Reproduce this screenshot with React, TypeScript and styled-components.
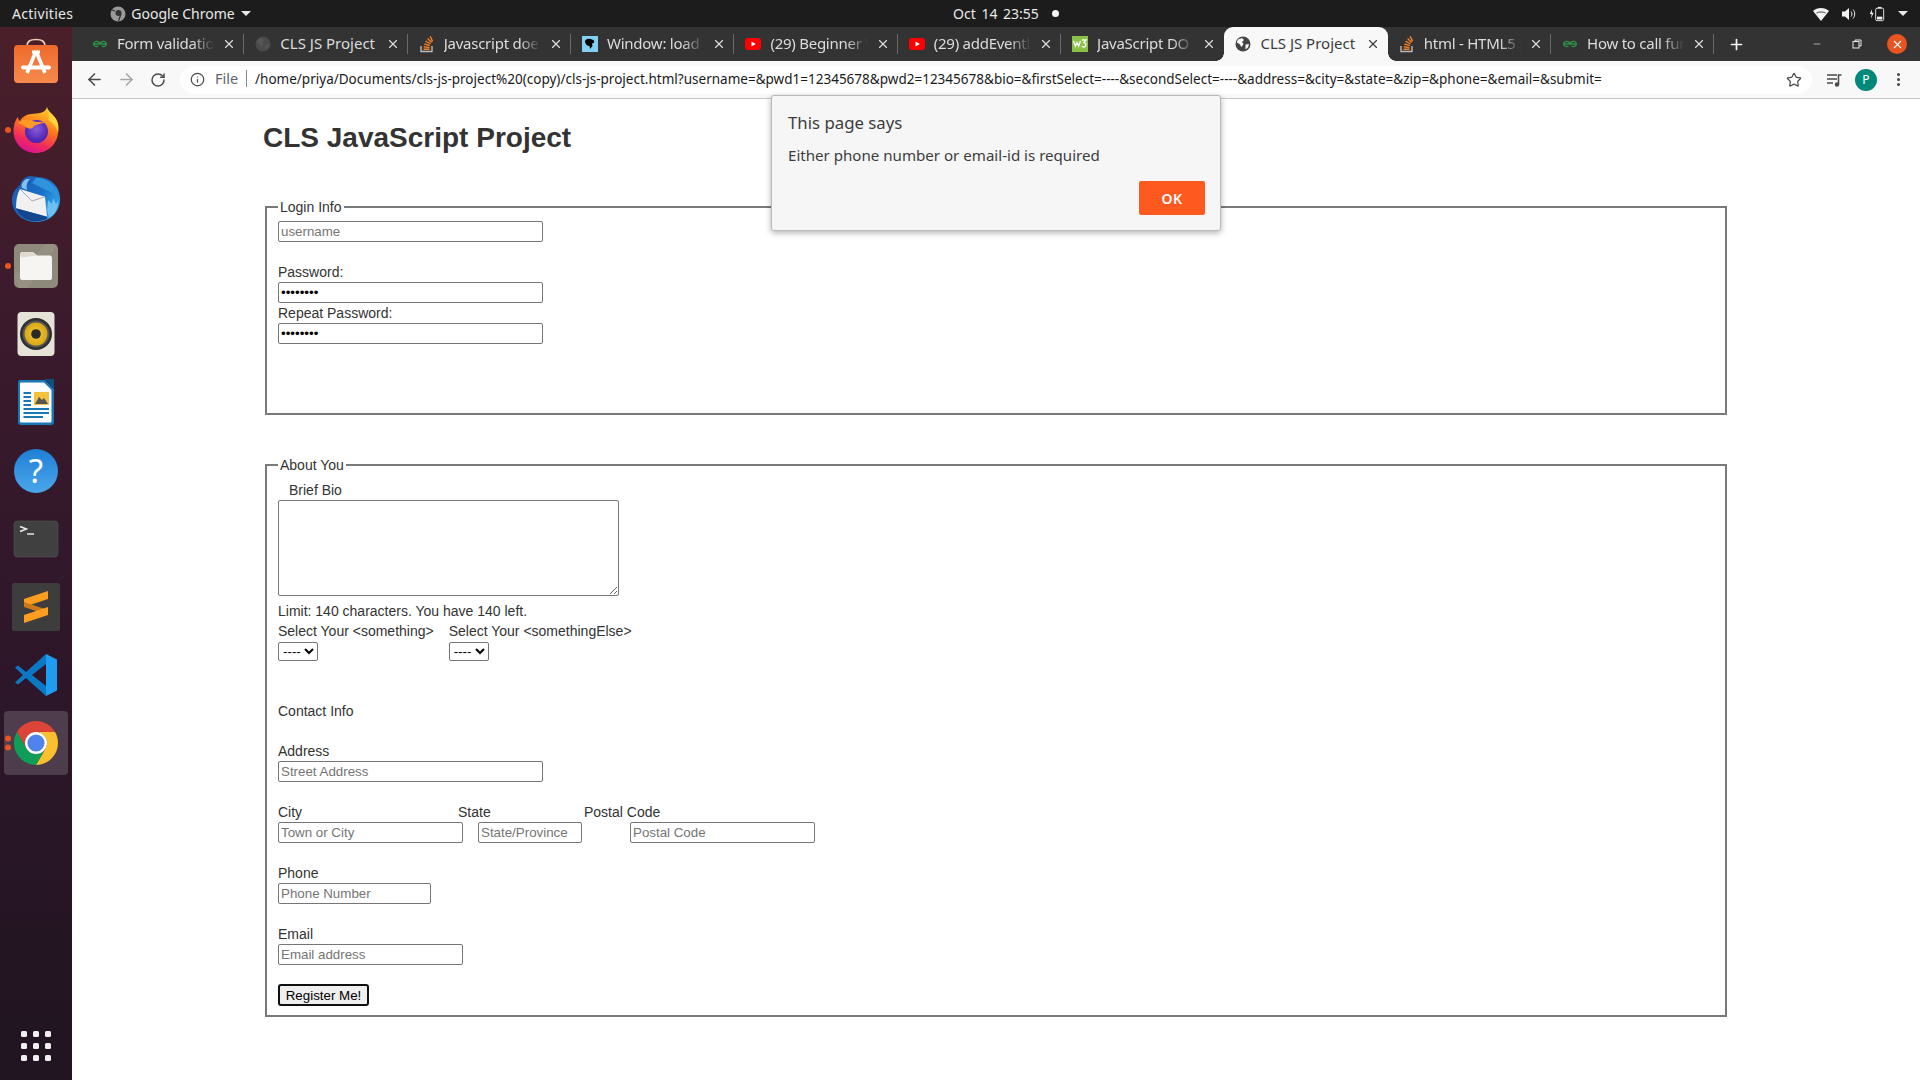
import React from 'react';
import styled, { createGlobalStyle } from 'styled-components';
import { ArrowLeft, ArrowRight, RotateCw, Info, Star, MoreVertical, Plus, X, Minus } from 'lucide-react';

const UI = '"Noto Sans", "Open Sans", sans-serif';

const Global = createGlobalStyle`
  html, body { margin: 0; padding: 0; height: 100%; background: #fff; overflow: hidden; }
  #root { height: 100%; }
`;

const Screen = styled.div`
  position: relative;
  width: 1920px;
  height: 1080px;
  overflow: hidden;
  display: flex;
  flex-direction: column;
  background: #fff;
`;

const TopBar = styled.header`
  height: 27px;
  flex: none;
  background: #1c1c1c;
  color: #e8e8e8;
  font: 14px ${UI};
  display: grid;
  grid-template-columns: 1fr auto 1fr;
  align-items: center;
  padding: 0 12px 0 12px;
`;
const TopLeft = styled.div`
  display: flex;
  align-items: center;
`;
const Activities = styled.span`
  letter-spacing: 0.3px;
`;
const AppMenu = styled.div`
  display: flex;
  align-items: center;
  gap: 5px;
  margin-left: 37px;
`;
const Caret = styled.span`
  width: 0;
  height: 0;
  border-left: 5px solid transparent;
  border-right: 5px solid transparent;
  border-top: 5px solid #e8e8e8;
  margin-left: 1px;
`;
const Clock = styled.div`
  display: flex;
  align-items: center;
  gap: 13px;
  word-spacing: 2px;
  margin-left: 92px;
`;
const RecDot = styled.span`
  width: 7px;
  height: 7px;
  border-radius: 50%;
  background: #f2f2f2;
`;
const TopRight = styled.div`
  display: flex;
  justify-content: flex-end;
  align-items: center;
  gap: 12px;
`;

const Desktop = styled.div`
  flex: 1;
  display: flex;
  min-height: 0;
`;

const Dock = styled.nav`
  width: 72px;
  flex: none;
  padding-top: 1px;
  box-sizing: border-box;
  display: flex;
  flex-direction: column;
  background: linear-gradient(180deg, #4a1f2a 0%, #3a1a2c 30%, #2c1629 65%, #201520 100%);
`;
const DockItem = styled.div<{ $active?: boolean }>`
  position: relative;
  height: 68.1px;
  flex: none;
  display: flex;
  align-items: center;
  justify-content: center;
  &::before {
    content: '';
    position: absolute;
    display: ${p => (p.$active ? 'block' : 'none')};
    inset: 2px 4px;
    border-radius: 4px;
    background: rgba(255, 255, 255, 0.17);
  }
  svg { position: relative; }
`;
const RunDots = styled.div`
  position: absolute;
  left: 4.5px;
  top: 50%;
  transform: translateY(-50%);
  display: flex;
  flex-direction: column;
  gap: 3px;
`;
const RunDot = styled.span`
  width: 6px;
  height: 6px;
  border-radius: 50%;
  background: #e95420;
`;
const AppGrid = styled.div`
  margin: auto 0 19px 21px;
  display: grid;
  grid-template-columns: repeat(3, 6px);
  gap: 6px;
`;
const AppGridDot = styled.span`
  width: 6px;
  height: 6px;
  border-radius: 1.5px;
  background: #f0f0f0;
`;

const Browser = styled.div`
  flex: 1;
  display: flex;
  flex-direction: column;
  min-width: 0;
`;

const TabStrip = styled.div`
  height: 34px;
  flex: none;
  background: #333333;
  display: flex;
  align-items: stretch;
  padding-left: 9px;
  padding-right: 13px;
`;
const Tab = styled.div<{ $active?: boolean; $sep?: boolean }>`
  position: relative;
  width: 163.35px;
  flex: none;
  box-sizing: border-box;
  display: flex;
  align-items: center;
  gap: 8px;
  padding: 0 8px 0 11px;
  font: 15px ${UI};
  color: ${p => (p.$active ? '#3c3c3c' : '#dcdcdc')};
  background: ${p => (p.$active ? '#f8f8f8' : 'transparent')};
  border-radius: ${p => (p.$active ? '9px 9px 0 0' : '0')};
  &::after {
    content: '';
    position: absolute;
    display: ${p => (p.$sep ? 'block' : 'none')};
    right: 0;
    top: 7px;
    height: 20px;
    width: 1px;
    background: #6a6a6a;
  }
  &::before {
    content: '';
    position: absolute;
    display: ${p => (p.$active ? 'block' : 'none')};
    bottom: 0;
    left: -8px;
    right: -8px;
    height: 8px;
    background:
      radial-gradient(circle at 0 0, #333 7.5px, #f8f8f8 8px) left bottom / 8px 8px no-repeat,
      radial-gradient(circle at 100% 0, #333 7.5px, #f8f8f8 8px) right bottom / 8px 8px no-repeat;
  }
`;
const TabTitle = styled.span<{ $fade?: boolean }>`
  flex: 1;
  min-width: 0;
  margin: -2px 0 0 1px;
  white-space: nowrap;
  overflow: hidden;
  ${p =>
    p.$fade
      ? `letter-spacing: -0.25px;
         -webkit-mask-image: linear-gradient(90deg, #000 78%, transparent 100%);
         mask-image: linear-gradient(90deg, #000 78%, transparent 100%);`
      : ''}
`;
const NewTab = styled.div`
  width: 44px;
  display: flex;
  align-items: center;
  justify-content: center;
  color: #f2f2f2;
`;
const WindowControls = styled.div`
  margin-left: auto;
  display: flex;
  align-items: center;
  color: #e8e8e8;
`;
const WinButton = styled.div`
  width: 40px;
  display: flex;
  align-items: center;
  justify-content: center;
`;
const CloseCircle = styled.div`
  width: 20px;
  height: 20px;
  border-radius: 50%;
  background: #e95420;
  color: #fff;
  display: flex;
  align-items: center;
  justify-content: center;
  margin-left: 10px;
`;

const Toolbar = styled.div`
  height: 37px;
  flex: none;
  box-sizing: content-box;
  background: #f8f8f8;
  border-bottom: 1px solid #c6c6c6;
  display: flex;
  align-items: center;
  padding: 0 6px;
`;
const NavButton = styled.div<{ $dim?: boolean }>`
  width: 32px;
  height: 28px;
  flex: none;
  display: flex;
  align-items: center;
  justify-content: center;
  color: ${p => (p.$dim ? '#a6a6a6' : '#4a4a4a')};
`;
const Omnibox = styled.div`
  flex: 1;
  min-width: 0;
  height: 28px;
  margin: 0 6px;
  background: #fff;
  border-radius: 14px;
  display: flex;
  align-items: center;
  padding: 0 10px 0 10px;
  font: 13.53px ${UI};
`;
const FileChip = styled.span`
  color: #5f6368;
  font-size: 14.4px;
  margin-left: 10px;
  margin-top: -2px;
  padding-right: 8px;
  border-right: 1px solid #8a8a8a;
  line-height: 17px;
`;
const UrlText = styled.span`
  flex: 1;
  color: #1a1a1a;
  margin-left: 8px;
  margin-top: -2px;
  white-space: nowrap;
  overflow: hidden;
`;
const Avatar = styled.div`
  width: 22px;
  height: 22px;
  border-radius: 50%;
  background: #00897b;
  color: #fff;
  font: 12px ${UI};
  display: flex;
  align-items: center;
  justify-content: center;
`;

const Page = styled.main`
  flex: 1;
  min-height: 0;
  padding-left: 191px;
  font: 14px "Liberation Sans", Arial, sans-serif;
  color: #333;
`;
const Title = styled.h1`
  margin: 23px 0 0;
  font: bold 28px/32px "Liberation Sans", Arial, sans-serif;
  color: #333;
`;
const Group = styled.fieldset<{ $top: number; $bottom: number }>`
  width: 1462px;
  box-sizing: border-box;
  margin: ${p => p.$top}px 0 0 2px;
  padding: 6px 11px ${p => p.$bottom}px 11px;
  border: 2px solid #7a7a7a;
`;
const Legend = styled.legend`
  padding: 0 2px;
  line-height: 16px;
`;
const FieldLabel = styled.label<{ $top?: number; $indent?: number }>`
  display: block;
  line-height: 16px;
  margin: ${p => p.$top ?? 0}px 0 2px ${p => p.$indent ?? 0}px;
`;
const TextField = styled.input<{ $w: number; $gap?: number }>`
  display: block;
  box-sizing: border-box;
  width: ${p => p.$w}px;
  height: 21px;
  margin: 0 0 0 ${p => p.$gap ?? 0}px;
  padding: 1px 2px;
  border: 1px solid #767676;
  border-radius: 2px;
  background: #fff;
  font: 13.33px "Liberation Sans", Arial, sans-serif;
  color: #000;
  &::placeholder { color: #757575; }
`;
const Bio = styled.textarea`
  display: block;
  box-sizing: border-box;
  width: 341px;
  height: 96px;
  margin: 0;
  padding: 2px;
  border: 1px solid #767676;
  border-radius: 2px;
  font: 13.33px "Liberation Sans", Arial, sans-serif;
`;
const Note = styled.div`
  line-height: 16px;
  margin-top: 7px;
`;
const SelectRow = styled.div`
  display: flex;
  gap: 15px;
  margin-top: 4px;
`;
const SelectCol = styled.div`
  display: flex;
  flex-direction: column;
  align-items: flex-start;
  gap: 3px;
  line-height: 16px;
`;
const Picker = styled.select`
  box-sizing: border-box;
  width: 40px;
  height: 19px;
  margin: 0;
  font: 13.33px "Liberation Sans", Arial, sans-serif;
  color: #000;
  background: #fff;
  border: 1px solid #767676;
  border-radius: 2px;
`;
const LabelRow = styled.div`
  display: flex;
  line-height: 16px;
  margin: 22px 0 2px;
`;
const LabelCell = styled.span<{ $w: number }>`
  width: ${p => p.$w}px;
  flex: none;
`;
const InputRow = styled.div`
  display: flex;
`;
const Submit = styled.button`
  display: block;
  box-sizing: border-box;
  width: 91px;
  height: 22px;
  margin: 19px 0 0;
  padding: 0;
  border: 2px solid #101010;
  border-radius: 3px;
  background: #efefef;
  font: 13.33px "Liberation Sans", Arial, sans-serif;
  color: #000;
`;

const Dialog = styled.div`
  position: absolute;
  left: 771px;
  top: 95px;
  width: 450px;
  height: 136px;
  box-sizing: border-box;
  background: #f6f6f6;
  border: 1px solid #b9b9b9;
  border-radius: 3px;
  box-shadow: 0 2px 6px rgba(0, 0, 0, 0.3);
  padding: 15px 15px 15px 16px;
  display: flex;
  flex-direction: column;
  font-family: ${UI};
  color: #3d3d3d;
`;
const DialogTitle = styled.div`
  font-size: 16.8px;
  line-height: 24px;
`;
const DialogText = styled.div`
  font-size: 15.1px;
  line-height: 20px;
  margin-top: 10px;
`;
const DialogOk = styled.button`
  align-self: flex-end;
  margin-top: auto;
  width: 66px;
  height: 34px;
  border: 0;
  border-radius: 2px;
  background: #fe5a1f;
  color: #fff;
  font: 600 14px ${UI};
  letter-spacing: 0.5px;
`;

const Globe = ({ c = '#444' }: { c?: string }) => (
  <svg width="16" height="16" viewBox="0 0 16 16" style={{ flex: 'none' }}>
    <circle cx="8" cy="8" r="7.5" fill={c} />
    <path d="M3 3.5 L7 2 L9 4 L7 6 L8.5 8 L6.5 11 L4.5 8 L1.8 6.5Z M10.5 8.5 L14 8 L13 11.5 L10.5 13.5Z" fill="#f8f8f8" opacity={c === '#444' ? 1 : 0.07} />
  </svg>
);
const Gfg = () => (
  <svg width="16" height="16" viewBox="0 0 16 16" style={{ flex: 'none' }}>
    <path d="M8 8 H15 M8 8 H1 M8 8 C7.5 5 3 4.5 1.8 7 C1 9.5 4 11.5 6.4 10 M8 8 C8.5 5 13 4.5 14.2 7 C15 9.5 12 11.5 9.6 10" fill="none" stroke="#2f8d46" strokeWidth="1.4" />
  </svg>
);
const StackO = () => (
  <svg width="16" height="18" viewBox="0 0 16 18" style={{ flex: 'none' }}>
    <path d="M2 11 V16.5 H13 V11" fill="none" stroke="#bcbbbb" strokeWidth="1.4" />
    <path d="M4.5 14.2 H10.5 M4.7 11.8 L10.5 12.6 M5.4 9 L10.9 10.6 M6.6 6.2 L11.6 9 M8.6 3.6 L12.6 7.6 M11.2 1.4 L13.6 6.4" stroke="#f48024" strokeWidth="1.4" fill="none" />
  </svg>
);
const Mdn = () => (
  <svg width="16" height="16" viewBox="0 0 16 16" style={{ flex: 'none' }}>
    <rect width="16" height="16" fill="#83d0f2" />
    <path d="M3 5 C4 2.5 8 2 10 3.5 C12 4 13 6 11.5 7 L10 7.5 L10.5 10 L8 13 L7.5 10 C5.5 10 3 8 3 5Z" fill="#000" />
  </svg>
);
const Yt = () => (
  <svg width="16" height="16" viewBox="0 0 16 16" style={{ flex: 'none' }}>
    <rect y="2" width="16" height="12" rx="3" fill="#f00" />
    <path d="M6.5 5.5 L10.8 8 L6.5 10.5Z" fill="#fff" />
  </svg>
);
const W3 = () => (
  <svg width="16" height="16" viewBox="0 0 16 16" style={{ flex: 'none' }}>
    <rect width="16" height="16" fill="#8ac249" />
    <path d="M1.5 5 L3.4 10 L5 6.5 L6.6 10 L8.5 5" fill="none" stroke="#fff" strokeWidth="1.3" />
    <path d="M10 4 H14 L12 6.6 C14.4 6.6 14.6 11 11.8 11 C10.8 11 10.2 10.6 9.8 10" fill="none" stroke="#fff" strokeWidth="1.3" />
  </svg>
);

const AppStoreIcon = () => (
  <svg width="48" height="48" viewBox="0 0 48 48">
    <defs><linearGradient id="as" x1="0" y1="0" x2="0" y2="1"><stop offset="0" stopColor="#ef6a2c" /><stop offset="1" stopColor="#f68a4e" /></linearGradient></defs>
    <path d="M15 9 C15 3 18 1.5 24 1.5 S33 3 33 9" fill="none" stroke="#eccdb0" strokeWidth="1.6" />
    <rect x="2" y="7" width="44" height="38" rx="4" fill="url(#as)" />
    <path d="M24 13 L15 35 M24 13 L33 35" stroke="#fff" strokeWidth="3.6" />
    <path d="M11 29.5 H37" stroke="#fff" strokeWidth="4" strokeLinecap="round" />
    <path d="M20 14 H28" stroke="#fff" strokeWidth="3" />
  </svg>
);
const FirefoxIcon = () => (
  <svg width="48" height="48" viewBox="0 0 48 48">
    <defs>
      <linearGradient id="ff" x1="0.7" y1="0" x2="0.3" y2="1"><stop offset="0" stopColor="#ffd02e" /><stop offset="0.4" stopColor="#ff7a1c" /><stop offset="0.75" stopColor="#f02a5c" /><stop offset="1" stopColor="#d8119a" /></linearGradient>
      <radialGradient id="ffp" cx="0.5" cy="0.4"><stop offset="0" stopColor="#8a5ce0" /><stop offset="1" stopColor="#4f27b0" /></radialGradient>
    </defs>
    <path d="M35 1 C36 6 41 8 44 13 C47 18 46.5 24 46 27 C45 38 36 47 24 47 C11 47 1.5 37 1.5 25 C1.5 20 3 14 6 11 C6 13 7 14.5 8 15 C10 11 15 8 19 8 C26 7 33 8 35 1Z" fill="url(#ff)" />
    <circle cx="24.5" cy="25.5" r="11.5" fill="url(#ffp)" />
    <path d="M6 17 C10 13 17 12 21 15 C24 17 30 15 33 17 C28 17 25 19 22 20 C20 25 14 22 11 19 C9 18 7 18 6 17Z" fill="#ff9a26" />
    <path d="M35 1 C36 6 41 8 44 13 C47 18 46.5 24 46 27 C45 22 41 16 36 14 C38 9 36 5 35 1Z" fill="#ffd33a" />
  </svg>
);
const ThunderbirdIcon = () => (
  <svg width="48" height="48" viewBox="0 0 48 48">
    <defs>
      <linearGradient id="tb" x1="0" y1="0" x2="1" y2="0.6"><stop offset="0" stopColor="#1c55ad" /><stop offset="0.6" stopColor="#1a70c8" /><stop offset="1" stopColor="#2ea4ea" /></linearGradient>
    </defs>
    <path d="M18 2 C12 3 9 7 8 11 C3 15 0 20 0 26 C0 38 10 48 24 48 C38 48 48 38 48 25 C48 12 38 3 25 3 C23 3 20 2 18 2Z" fill="url(#tb)" />
    <path d="M24 4 C34 3 46 12 47 27 C44 22 40 18 34 16 L20 9Z" fill="#2f94dc" />
    <path d="M36 26 L40 30 L41 24 L44 30 L46 27 C46 36 42 41 37 44 L35 36Z" fill="#6cc0f2" />
    <path d="M8 15 L33 22.7 L35 42.7 L4 34.3 C4 27 5 20 8 15Z" fill="#f2f1f2" />
    <path d="M8 15 L20 27 L33 22.7" fill="none" stroke="#9aa4ae" strokeWidth="0.9" />
    <path d="M4 34.3 C6 41 13 46 22 47.5 C27 47.5 31 46.5 35 45 L35 42.7 Z" fill="#14458f" />
    <path d="M14 5 C10 8 9 11 10 14 L15 16 C14 11 15 8 18 5Z" fill="#7fc2f0" />
  </svg>
);
const FilesIcon = () => (
  <svg width="48" height="48" viewBox="0 0 48 48">
    <rect x="2" y="2" width="44" height="44" rx="5" fill="#8e8a7b" />
    <path d="M2 34 L34 2 H46 L16 46 H7Z" fill="#fff" opacity="0.06" />
    <path d="M8 13 C8 11 9 10 11 10 H21 L25 13.5 H38 C39 13.5 40 14.5 40 16 V36 C40 37 39 38 38 38 H10 C9 38 8 37 8 36Z" fill="#f7f5f2" />
    <path d="M8 13 C8 11 9 10 11 10 H21 L25 13.5 L9 15.5Z" fill="#dedbd3" />
  </svg>
);
const RhythmIcon = () => (
  <svg width="48" height="48" viewBox="0 0 48 48">
    <defs><radialGradient id="rb"><stop offset="0" stopColor="#f3cd3a" /><stop offset="1" stopColor="#d8a615" /></radialGradient></defs>
    <rect x="5.5" y="2" width="37" height="44" rx="4" fill="#e5e2d7" />
    <circle cx="24" cy="24" r="16" fill="#2f2f2f" />
    <circle cx="24" cy="24" r="13.5" fill="#555" />
    <circle cx="24" cy="24" r="11.5" fill="url(#rb)" />
    <circle cx="24" cy="24" r="4.8" fill="#2a2a2a" />
  </svg>
);
const WriterIcon = () => (
  <svg width="48" height="48" viewBox="0 0 48 48">
    <path d="M8 1 H33 L42 10 V43 C42 45 41 46 39 46 H9 C7 46 6 45 6 43 V3 C6 2 7 1 8 1Z" fill="#1a77b5" />
    <path d="M9 3.5 H32 L39.5 11 V42 C39.5 43 39 43.5 38 43.5 H9.5 C8.5 43.5 8 43 8 42 V5 C8 4 8.5 3.5 9 3.5Z" fill="#fbfcfd" />
    <path d="M33 0 H42 V10Z" fill="#114f7e" />
    <path d="M11.5 14 H19 M11.5 18 H19 M11.5 22 H19 M11.5 26 H19 M11.5 30 H37 M11.5 34 H37 M11.5 38 H31" stroke="#1a77b5" strokeWidth="2" />
    <rect x="22" y="13" width="15" height="13" fill="#f2c23e" />
    <path d="M23 25 L27 18 L30 21 L32 19 L36 25Z" fill="#555" />
  </svg>
);
const HelpIcon = () => (
  <svg width="48" height="48" viewBox="0 0 48 48">
    <defs><linearGradient id="hp" x1="0" y1="0" x2="0" y2="1"><stop offset="0" stopColor="#1f7fd6" /><stop offset="1" stopColor="#4aa6ea" /></linearGradient></defs>
    <circle cx="24" cy="24" r="22" fill="url(#hp)" />
    <text x="24" y="36" textAnchor="middle" fontFamily="Noto Sans" fontSize="33" fill="#fff">?</text>
  </svg>
);
const TerminalIcon = () => (
  <svg width="48" height="48" viewBox="0 0 48 48">
    <rect x="2" y="6" width="44" height="36" rx="3.5" fill="#404040" stroke="#555" strokeWidth="0.6" />
    <path d="M8 11.5 L14.5 14 L8 16.5" fill="none" stroke="#eee" strokeWidth="1.4" />
    <path d="M15 19 H22" stroke="#eee" strokeWidth="1.4" />
  </svg>
);
const SublimeIcon = () => (
  <svg width="48" height="48" viewBox="0 0 48 48">
    <rect width="48" height="48" rx="2" fill="#3d3d3d" />
    <path d="M36 8 L12 16 V24 L36 16Z" fill="#ff9d1e" />
    <path d="M12 19 L36 27 V32 L12 24Z" fill="#c9781a" />
    <path d="M36 24 L12 32 V40 L36 32Z" fill="#ff9d1e" />
  </svg>
);
const CodeIcon = () => (
  <svg width="48" height="48" viewBox="0 0 48 48">
    <path d="M34 45 L14 27 L6 33.5 L3 31.5 L11 24 L3 16.5 L6 14.5 L14 21 L34 3 V13 L20 24 L34 35Z" fill="#0b78c6" />
    <path d="M34 3 L45 8.5 V39.5 L34 45Z" fill="#1f9cf0" />
  </svg>
);
const ChromeIcon = () => {
  const red = 'M4.95 13 A22 22 0 0 1 43.05 13 L24 13 A11 11 0 0 0 14.47 29.5Z';
  return (
    <svg width="48" height="48" viewBox="0 0 48 48">
      <path d={red} fill="#db4437" />
      <path d={red} fill="#fbc02d" transform="rotate(120 24 24)" />
      <path d={red} fill="#0f9d58" transform="rotate(240 24 24)" />
      <circle cx="24" cy="24" r="11" fill="#fff" />
      <circle cx="24" cy="24" r="8.6" fill="#4f84ec" />
    </svg>
  );
};
const ShellChrome = () => (
  <svg width="16" height="16" viewBox="0 0 16 16">
    <circle cx="8" cy="8" r="7.5" fill="#9a9a9a" />
    <circle cx="8.5" cy="7" r="3" fill="#333" />
    <path d="M11 8 L8.5 15 M5 5 L2 4" stroke="#333" strokeWidth="1.2" />
  </svg>
);
const Wifi = () => (
  <svg width="16" height="14" viewBox="0 0 16 14"><path d="M0 4 C4 0 12 0 16 4 L8 14Z" fill="#f2f2f2" /><path d="M3.5 6 C6 4.6 10 4.6 12.5 6" stroke="#1c1c1c" strokeWidth="0.8" fill="none" /></svg>
);
const Volume = () => (
  <svg width="16" height="14" viewBox="0 0 16 14"><path d="M1 4.5 H4 L8 1 V13 L4 9.5 H1Z" fill="#f2f2f2" /><path d="M10 4.5 C11.3 6 11.3 8 10 9.5 M12 2.5 C14.3 5 14.3 9 12 11.5" stroke="#f2f2f2" strokeWidth="1" fill="none" /></svg>
);
const Battery = () => (
  <svg width="16" height="18" viewBox="0 0 18 18"><path d="M3.5 3.5 L0.8 9 H3 L2.2 14 L5.2 7.6 H3.2Z" fill="#f2f2f2" /><rect x="7.5" y="2.5" width="9" height="14" rx="1.5" fill="none" stroke="#f2f2f2" /><rect x="10" y="1" width="4" height="1.5" fill="#f2f2f2" /><rect x="9" y="12" width="6" height="3.2" fill="#f2f2f2" /></svg>
);
const MediaIcon = () => (
  <svg width="18" height="18" viewBox="0 0 18 18"><path d="M2 4 H12 M2 8 H12 M2 12 H8" stroke="#4a4a4a" strokeWidth="1.5" /><circle cx="12" cy="13.5" r="2.2" fill="#4a4a4a" /><path d="M13.5 13.5 V4 H16.5" stroke="#4a4a4a" strokeWidth="1.5" fill="none" /></svg>
);
const Restore = () => (
  <svg width="10" height="10" viewBox="0 0 10 10"><rect x="1" y="2.5" width="6" height="6.5" fill="none" stroke="#e8e8e8" /><path d="M3 2.5 V1 H9 V7 H7" fill="none" stroke="#e8e8e8" /></svg>
);

const tabs: { title: string; icon: React.ReactNode; active?: boolean; sep?: boolean; fade?: boolean }[] = [
  { title: 'Form validatio', icon: <Gfg />, sep: true, fade: true },
  { title: 'CLS JS Project', icon: <Globe c="#4a4a4a" />, sep: true },
  { title: 'Javascript doe', icon: <StackO />, sep: true, fade: true },
  { title: 'Window: load', icon: <Mdn />, sep: true, fade: true },
  { title: '(29) Beginner V', icon: <Yt />, sep: true, fade: true },
  { title: '(29) addEventl', icon: <Yt />, sep: true, fade: true },
  { title: 'JavaScript DO', icon: <W3 />, fade: true },
  { title: 'CLS JS Project', icon: <Globe />, active: true },
  { title: 'html - HTML5 p', icon: <StackO />, sep: true, fade: true },
  { title: 'How to call fur', icon: <Gfg />, sep: true, fade: true },
];

const dockApps: { icon: React.ReactNode; dots?: number; active?: boolean }[] = [
  { icon: <AppStoreIcon /> },
  { icon: <FirefoxIcon />, dots: 1 },
  { icon: <ThunderbirdIcon /> },
  { icon: <FilesIcon />, dots: 1 },
  { icon: <RhythmIcon /> },
  { icon: <WriterIcon /> },
  { icon: <HelpIcon /> },
  { icon: <TerminalIcon /> },
  { icon: <SublimeIcon /> },
  { icon: <CodeIcon /> },
  { icon: <ChromeIcon />, dots: 2, active: true },
];

const URL_TEXT =
  '/home/priya/Documents/cls-js-project%20(copy)/cls-js-project.html?username=&pwd1=12345678&pwd2=12345678&bio=&firstSelect=----&secondSelect=----&address=&city=&state=&zip=&phone=&email=&submit=';

export default function App() {
  return (
    <Screen>
      <Global />
      <TopBar>
        <TopLeft>
          <Activities>Activities</Activities>
          <AppMenu>
            <ShellChrome />
            <span>Google Chrome</span>
            <Caret />
          </AppMenu>
        </TopLeft>
        <Clock>
          <span>Oct 14  23:55</span>
          <RecDot />
        </Clock>
        <TopRight>
          <Wifi />
          <Volume />
          <Battery />
          <Caret />
        </TopRight>
      </TopBar>
      <Desktop>
        <Dock>
          {dockApps.map((a, i) => (
            <DockItem key={i} $active={a.active}>
              {a.icon}
              {a.dots ? (
                <RunDots>
                  {Array.from({ length: a.dots }).map((_, j) => (
                    <RunDot key={j} />
                  ))}
                </RunDots>
              ) : null}
            </DockItem>
          ))}
          <AppGrid>
            {Array.from({ length: 9 }).map((_, i) => (
              <AppGridDot key={i} />
            ))}
          </AppGrid>
        </Dock>
        <Browser>
          <TabStrip>
            {tabs.map((t, i) => (
              <Tab key={i} $active={t.active} $sep={t.sep}>
                {t.icon}
                <TabTitle $fade={t.fade}>{t.title}</TabTitle>
                <X size={14} strokeWidth={2} style={{ flex: 'none' }} />
              </Tab>
            ))}
            <NewTab>
              <Plus size={17} strokeWidth={2.4} />
            </NewTab>
            <WindowControls>
              <WinButton>
                <Minus size={10} strokeWidth={1.5} />
              </WinButton>
              <WinButton>
                <Restore />
              </WinButton>
              <CloseCircle>
                <X size={13} strokeWidth={2} />
              </CloseCircle>
            </WindowControls>
          </TabStrip>
          <Toolbar>
            <NavButton>
              <ArrowLeft size={19} strokeWidth={2} />
            </NavButton>
            <NavButton $dim>
              <ArrowRight size={19} strokeWidth={2} />
            </NavButton>
            <NavButton>
              <RotateCw size={16} strokeWidth={2.2} />
            </NavButton>
            <Omnibox>
              <Info size={15} color="#4a4a4a" strokeWidth={2} style={{ flex: 'none' }} />
              <FileChip>File</FileChip>
              <UrlText>{URL_TEXT}</UrlText>
              <Star size={16} color="#4a4a4a" strokeWidth={1.8} style={{ flex: 'none' }} />
            </Omnibox>
            <NavButton>
              <MediaIcon />
            </NavButton>
            <NavButton>
              <Avatar>P</Avatar>
            </NavButton>
            <NavButton>
              <MoreVertical size={17} strokeWidth={2.4} />
            </NavButton>
          </Toolbar>
          <Page>
            <Title>CLS JavaScript Project</Title>
            <form>
              <Group $top={45} $bottom={69}>
                <Legend>Login Info</Legend>
                <TextField $w={265} placeholder="username" />
                <FieldLabel $top={22}>Password:</FieldLabel>
                <TextField $w={265} type="password" defaultValue="12345678" />
                <FieldLabel $top={2}>Repeat Password:</FieldLabel>
                <TextField $w={265} type="password" defaultValue="12345678" />
              </Group>
              <Group $top={42} $bottom={9}>
                <Legend>About You</Legend>
                <FieldLabel $top={3} $indent={11}>Brief Bio</FieldLabel>
                <Bio />
                <Note>Limit: 140 characters. You have 140 left.</Note>
                <SelectRow>
                  <SelectCol>
                    <span>Select Your &lt;something&gt;</span>
                    <Picker><option>----</option></Picker>
                  </SelectCol>
                  <SelectCol>
                    <span>Select Your &lt;somethingElse&gt;</span>
                    <Picker><option>----</option></Picker>
                  </SelectCol>
                </SelectRow>
                <FieldLabel $top={42}>Contact Info</FieldLabel>
                <FieldLabel $top={24}>Address</FieldLabel>
                <TextField $w={265} placeholder="Street Address" />
                <LabelRow>
                  <LabelCell $w={180}>City</LabelCell>
                  <LabelCell $w={126}>State</LabelCell>
                  <span>Postal Code</span>
                </LabelRow>
                <InputRow>
                  <TextField $w={185} placeholder="Town or City" />
                  <TextField $w={104} $gap={15} placeholder="State/Province" />
                  <TextField $w={185} $gap={48} placeholder="Postal Code" />
                </InputRow>
                <FieldLabel $top={22}>Phone</FieldLabel>
                <TextField $w={153} placeholder="Phone Number" />
                <FieldLabel $top={22}>Email</FieldLabel>
                <TextField $w={185} placeholder="Email address" />
                <Submit type="button">Register Me!</Submit>
              </Group>
            </form>
          </Page>
        </Browser>
      </Desktop>
      <Dialog>
        <DialogTitle>This page says</DialogTitle>
        <DialogText>Either phone number or email-id is required</DialogText>
        <DialogOk type="button">OK</DialogOk>
      </Dialog>
    </Screen>
  );
}
